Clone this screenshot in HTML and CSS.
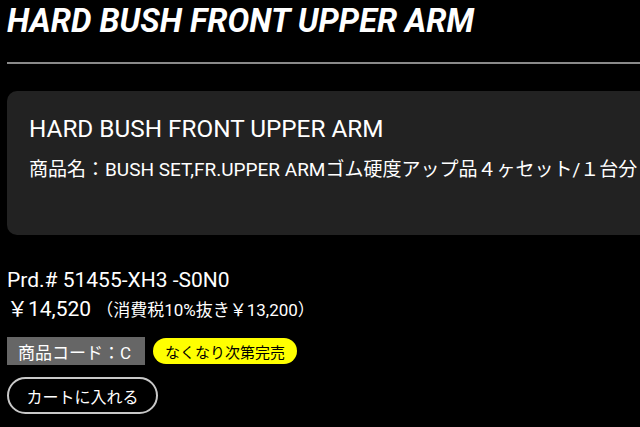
FILE: index.html
```html
<!DOCTYPE html>
<html lang="ja">
<head>
<meta charset="utf-8">
<title>HARD BUSH FRONT UPPER ARM</title>
<link rel="stylesheet" href="styles.css">
</head>
<body>
<main class="product">
  <h1 class="product-title">HARD BUSH FRONT UPPER ARM</h1>
  <hr class="rule">
  <section class="summary">
    <h2 class="summary-name">HARD BUSH FRONT UPPER ARM</h2>
    <p class="summary-desc">商品名：BUSH SET,FR.UPPER ARMゴム硬度アップ品４ヶセット/１台分</p>
  </section>
  <div class="info">
    <p class="part-no">Prd.# 51455-XH3 -S0N0</p>
    <p class="price"><span class="price-main">￥14,520</span><span class="price-tax">（消費税10%抜き￥13,200）</span></p>
    <div class="badges">
      <span class="badge badge-code">商品コード：C</span>
      <span class="badge badge-stock">なくなり次第完売</span>
    </div>
    <button class="cart-btn" type="button">カートに入れる</button>
  </div>
</main>
</body>
</html>
```

FILE: styles.css
```css
html, body {
  margin: 0;
  padding: 0;
  background: #000;
  color: #fff;
  font-family: Roboto, "Noto Sans CJK JP", sans-serif;
  overflow: hidden;
}

.product {
  padding: 0 0 0 7px;
}

.product-title {
  margin: 0;
  padding-top: 4px;
  font-size: 32.5px;
  line-height: 34px;
  font-weight: 700;
  font-style: italic;
}

.rule {
  margin: 24px 0 0 0;
  border: 0;
  height: 2px;
  background: #8a8a8a;
}

.summary {
  margin-top: 27px;
  margin-right: -20px;
  background: #222;
  border-radius: 10px;
  padding: 24px 22px 0;
  height: 120px;
}

.summary-name {
  margin: 0;
  font-size: 24.3px;
  line-height: 28px;
  font-weight: 400;
}

.summary-desc {
  margin: 15px 0 0;
  font-size: 19px;
  line-height: 24px;
  white-space: nowrap;
}

.info {
  padding-top: 32px;
}

.part-no {
  margin: 0;
  font-size: 21px;
  line-height: 26px;
}

.price {
  margin: 3px 0 0;
  display: flex;
  align-items: baseline;
}

.price-main {
  font-size: 21px;
  line-height: 26px;
}

.price-tax {
  font-size: 17px;
  margin-left: 5px;
}

.badges {
  margin-top: 15px;
  display: flex;
  gap: 8px;
  align-items: center;
}

.badge {
  display: inline-flex;
  align-items: center;
  height: 28px;
  box-sizing: border-box;
}

.badge-code {
  background: #666;
  color: #fff;
  padding: 0 8px 0 11px;
  font-size: 17px;
  width: 138px;
}

.badge-stock {
  background: #ffff00;
  color: #000;
  height: 26px;
  padding: 0 12px;
  border-radius: 13px;
  font-size: 15px;
}

.cart-btn {
  margin-top: 12px;
  display: block;
  width: 151px;
  height: 37px;
  box-sizing: border-box;
  background: transparent;
  color: #fff;
  border: 2px solid #c8c8c8;
  border-radius: 19px;
  font-family: inherit;
  font-size: 16px;
  padding: 0;
}
```
